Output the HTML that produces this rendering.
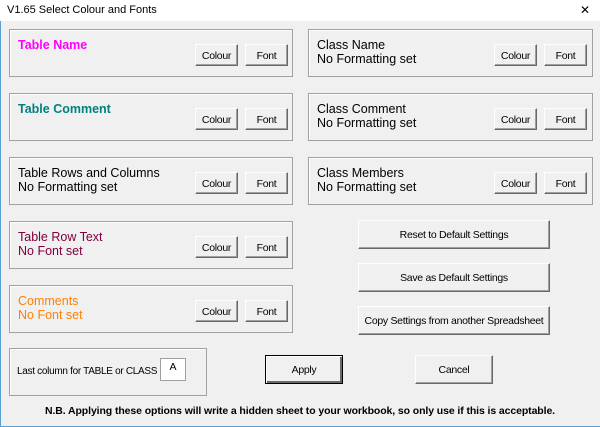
<!DOCTYPE html><html><head><style>
body{margin:0;width:600px;height:427px;background:#f0f0f0;position:relative;overflow:hidden;font-family:"Liberation Sans",sans-serif}
.t{position:absolute;left:0;top:0;width:600px;height:21px;background:#fff;font-size:11px;line-height:21px}
.tt{position:absolute;left:7px}
.x{position:absolute;left:580px;top:0;font-size:12px}
.f{position:absolute;border:1px solid #a0a0a0;box-shadow:inset 1px 1px 0 #fff;box-sizing:border-box}
.l{position:absolute;font-size:12.5px;line-height:14px;white-space:nowrap}
.b{position:absolute;box-sizing:border-box;background:#f0f0f0;border:1px solid;border-color:#fff #696969 #696969 #fff;box-shadow:inset -1px -1px 0 #a0a0a0;font-size:10.5px;letter-spacing:-0.3px;white-space:nowrap;text-align:center;display:flex;align-items:center;justify-content:center;padding-top:1px}
</style></head><body>
<div class="t"><span class="tt">V1.65 Select Colour and Fonts</span><span class="x">✕</span></div>
<div style="position:absolute;left:0;top:21px;width:1px;height:406px;background:#5aa0d0"></div>
<div style="position:absolute;left:0;top:426px;width:600px;height:1px;background:#5aa0d0"></div>

<div class="f" style="left:9px;top:29px;width:284px;height:48px"></div>
<div class="l" style="left:18px;top:38px;color:#f0f;font-weight:bold">Table Name</div>
<div class="b" style="left:195px;top:44px;width:43px;height:22px">Colour</div>
<div class="b" style="left:245px;top:44px;width:43px;height:22px">Font</div>

<div class="f" style="left:9px;top:93px;width:284px;height:48px"></div>
<div class="l" style="left:18px;top:102px;color:#008080;font-weight:bold">Table Comment</div>
<div class="b" style="left:195px;top:108px;width:43px;height:22px">Colour</div>
<div class="b" style="left:245px;top:108px;width:43px;height:22px">Font</div>

<div class="f" style="left:9px;top:157px;width:284px;height:48px"></div>
<div class="l" style="left:18px;top:166px">Table Rows and Columns<br>No Formatting set</div>
<div class="b" style="left:195px;top:172px;width:43px;height:22px">Colour</div>
<div class="b" style="left:245px;top:172px;width:43px;height:22px">Font</div>

<div class="f" style="left:9px;top:221px;width:284px;height:48px"></div>
<div class="l" style="left:18px;top:230px;color:#800040">Table Row Text<br>No Font set</div>
<div class="b" style="left:195px;top:236px;width:43px;height:22px">Colour</div>
<div class="b" style="left:245px;top:236px;width:43px;height:22px">Font</div>

<div class="f" style="left:9px;top:285px;width:284px;height:48px"></div>
<div class="l" style="left:18px;top:294px;color:#ff8000">Comments<br>No Font set</div>
<div class="b" style="left:195px;top:300px;width:43px;height:22px">Colour</div>
<div class="b" style="left:245px;top:300px;width:43px;height:22px">Font</div>

<div class="f" style="left:308px;top:29px;width:285px;height:48px"></div>
<div class="l" style="left:317px;top:38px">Class Name<br>No Formatting set</div>
<div class="b" style="left:494px;top:44px;width:43px;height:22px">Colour</div>
<div class="b" style="left:544px;top:44px;width:43px;height:22px">Font</div>

<div class="f" style="left:308px;top:93px;width:285px;height:48px"></div>
<div class="l" style="left:317px;top:102px">Class Comment<br>No Formatting set</div>
<div class="b" style="left:494px;top:108px;width:43px;height:22px">Colour</div>
<div class="b" style="left:544px;top:108px;width:43px;height:22px">Font</div>

<div class="f" style="left:308px;top:157px;width:285px;height:48px"></div>
<div class="l" style="left:317px;top:166px">Class Members<br>No Formatting set</div>
<div class="b" style="left:494px;top:172px;width:43px;height:22px">Colour</div>
<div class="b" style="left:544px;top:172px;width:43px;height:22px">Font</div>

<div class="b" style="left:358px;top:220px;width:192px;height:29px">Reset to Default Settings</div>
<div class="b" style="left:358px;top:263px;width:192px;height:29px">Save as Default Settings</div>
<div class="b" style="left:358px;top:306px;width:192px;height:29px">Copy Settings from another Spreadsheet</div>

<div class="f" style="left:9px;top:348px;width:198px;height:48px"></div>
<div class="l" style="left:17px;top:365px;font-size:10px;letter-spacing:-0.3px">Last column for TABLE or CLASS</div>
<div style="position:absolute;left:160px;top:358px;width:26px;height:23px;background:#fff;border:1px solid #a0a0a0;box-sizing:border-box;font-size:10.5px;text-align:center;line-height:16px">A</div>

<div class="b" style="left:265px;top:355px;width:78px;height:29px;border:1px solid #000;box-shadow:inset 1px 1px 0 #fff,inset -2px -2px 0 #696969">Apply</div>
<div class="b" style="left:415px;top:355px;width:78px;height:29px">Cancel</div>

<div class="l" style="left:0;width:600px;text-align:center;top:404px;font-size:10.5px;letter-spacing:-0.1px;font-weight:bold">N.B. Applying these options will write a hidden sheet to your workbook, so only use if this is acceptable.</div>
</body></html>
